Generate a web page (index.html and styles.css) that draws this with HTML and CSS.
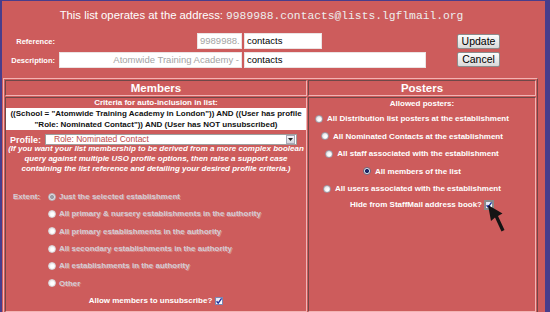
FILE: index.html
```html
<!DOCTYPE html>
<html>
<head>
<meta charset="utf-8">
<link rel="stylesheet" href="styles.css">
</head>
<body>
<div class="frame">
  <div class="title">This list operates at the address: <span class="addr">9989988.contacts@lists.lgflmail.org</span></div>
  <div class="form">
    <div class="lbl">Reference:</div>
    <div class="in in-pre in-ref">9989988.</div>
    <div class="in in-ref2">contacts</div>
    <div class="btn btn-up">Update</div>
    <div class="lbl">Description:</div>
    <div class="in in-pre in-desc">Atomwide Training Academy -</div>
    <div class="in in-desc2">contacts</div>
    <div class="btn">Cancel</div>
  </div>
  <div class="panels">
    <div class="hd">Members</div>
    <div class="hd">Posters</div>
    <div class="cell">
      <div class="crit-title">Criteria for auto-inclusion in list:</div>
      <div class="crit">((School = "Atomwide Training Academy in London")) AND ((User has profile<br>"Role: Nominated Contact")) AND (User has NOT unsubscribed)</div>
      <div class="profile">
        <div class="plbl">Profile:</div>
        <div class="select"><span class="seltext">Role: Nominated Contact</span><span class="arrow"><svg width="5" height="3" viewBox="0 0 5 3"><path d="M0 0H5L2.5 3Z" fill="#222"/></svg></span></div>
      </div>
      <div class="note">(If you want your list membership to be derived from a more complex boolean<br>query against multiple USO profile options, then raise a support case<br>containing the list reference and detailing your desired profile criteria.)</div>
      <div class="extent">
        <div class="elbl">Extent:</div>
        <div class="eopts">
          <div class="erow"><span class="radio dis on"></span>Just the selected establishment</div>
          <div class="erow"><span class="radio dis"></span>All primary &amp; nursery establishments in the authority</div>
          <div class="erow"><span class="radio dis"></span>All primary establishments in the authority</div>
          <div class="erow"><span class="radio dis"></span>All secondary establishments in the authority</div>
          <div class="erow"><span class="radio dis"></span>All establishments in the authority</div>
          <div class="erow"><span class="radio dis"></span>Other</div>
        </div>
      </div>
      <div class="allow">Allow members to unsubscribe? <span class="chk"><svg width="8" height="8" viewBox="0 0 8 8"><path d="M1.6 4.2L3.2 6.2L6.6 1.4" fill="none" stroke="#1f2f9c" stroke-width="1.4"/></svg></span></div>
    </div>
    <div class="cell">
      <div class="allowed">Allowed posters:</div>
      <div class="prow first"><span class="radio"></span>All Distribution list posters at the establishment</div>
      <div class="prow"><span class="radio"></span>All Nominated Contacts at the establishment</div>
      <div class="prow"><span class="radio"></span>All staff associated with the establishment</div>
      <div class="prow"><span class="radio on"></span>All members of the list</div>
      <div class="prow"><span class="radio"></span>All users associated with the establishment</div>
      <div class="hide">Hide from StaffMail address book? <span class="chk chk-focus"><svg width="8" height="8" viewBox="0 0 8 8"><path d="M1.6 4.2L3.2 6.2L6.6 1.4" fill="none" stroke="#1f2f9c" stroke-width="1.4"/></svg></span></div>
    </div>
  </div>
  <svg class="cursor" width="20" height="30" viewBox="0 0 20 30"><path d="M0 0L3 16L7 12.5L13.5 26.5L16.5 25L10 11L14.5 8.5Z" fill="#141414"/></svg>
</div>
</body>
</html>
```

FILE: styles.css
```css
body {
  margin: 0;
  background: #483d8b;
  font-family: "Liberation Sans", Arial, sans-serif;
  height: 312px;
  overflow: hidden;
}
.frame {
  position: relative;
  margin: 1px 5px 0 2px;
  height: 311px;
  background: #cd5c5c;
  color: #fff;
  overflow: hidden;
}
.title {
  padding: 7px 24px 0 0;
  text-align: center;
  font-size: 11.3px;
  line-height: 14px;
  white-space: nowrap;
}
.addr {
  font-family: "Liberation Mono", monospace;
  color: #eeeeee;
}
.form {
  display: grid;
  grid-template-columns: 55px 187px 213px 43px;
  grid-template-rows: 16px 16px;
  row-gap: 3px;
  margin-top: 10px;
  align-items: center;
}
.lbl {
  text-align: right;
  padding-right: 2px;
  font-weight: bold;
  font-size: 7.5px;
}
.in {
  height: 16px;
  box-sizing: border-box;
  background: #fff;
  border: 1px solid #ebe3e3;
  font-size: 9.5px;
  line-height: 14px;
  padding: 0 2px;
  color: #000;
  white-space: nowrap;
  overflow: hidden;
}
.in-pre {
  justify-self: end;
  margin-right: 2px;
  text-align: right;
  color: #a3a3a3;
}
.in-ref { width: 45px; }
.in-desc { width: 183px; }
.in-ref2 { width: 78px; justify-self: start; }
.in-desc2 { width: 182px; justify-self: start; }
.btn {
  align-self: start;
  height: 15px;
  width: 43px;
  box-sizing: border-box;
  border: 1px solid #8c8c8c;
  border-radius: 2px;
  background: linear-gradient(#fcfcfc, #d9d9d9);
  color: #000;
  font-size: 10.5px;
  line-height: 13px;
  text-align: center;
}
.btn-up { margin-top: 1px; }
.panels {
  display: grid;
  grid-template-columns: 302px 228px;
  grid-template-rows: 16px 215px;
  gap: 1px;
  padding: 1px;
  width: max-content;
  border: 1px solid;
  border-color: #f3b3b3 #6e4848 #6e4848 #f3b3b3;
  margin: 10px 0 0 1px;
}
.hd, .cell {
  box-sizing: border-box;
  border: 1px solid;
  border-color: #6e4848 #f3b3b3 #f3b3b3 #6e4848;
}
.hd {
  font-weight: bold;
  font-size: 11.5px;
  line-height: 14px;
  text-align: center;
}
.cell {
  font-size: 8px;
  font-weight: bold;
}
.crit-title {
  text-align: center;
  line-height: 10px;
}
.crit {
  background: #fff;
  color: #111;
  text-align: center;
  line-height: 11px;
  white-space: nowrap;
}
.profile {
  display: flex;
  align-items: center;
  height: 11px;
  margin-top: 4px;
}
.plbl {
  width: 35px;
  padding-left: 4px;
  font-size: 9px;
  white-space: nowrap;
}
.select {
  display: flex;
  align-items: center;
  width: 252px;
  height: 11px;
  box-sizing: border-box;
  background: #fff;
  border: 1px solid #9e9e9e;
}
.seltext {
  flex: 1;
  padding-left: 8px;
  color: #bd4c4c;
  font-weight: normal;
  font-size: 8.5px;
  line-height: 9px;
  white-space: nowrap;
}
.arrow {
  width: 9px;
  height: 9px;
  margin-right: 1px;
  box-sizing: border-box;
  border: 1px solid #a8a8b8;
  background: linear-gradient(#f4f4f8, #d4d4dc);
  display: flex;
  align-items: center;
  justify-content: center;
}
.note {
  font-style: italic;
  text-align: center;
  line-height: 10px;
  white-space: nowrap;
  margin-top: -1px;
}
.extent {
  display: flex;
  margin-top: 14px;
}
.elbl, .erow {
  color: #d4ccd4;
  text-shadow: 1px 1px 0 rgba(255, 255, 255, 0.3);
}
.elbl {
  width: 35px;
  padding-left: 7px;
  height: 17.3px;
  line-height: 17.3px;
}
.erow {
  display: flex;
  align-items: center;
  height: 17.3px;
}
.radio {
  width: 8px;
  height: 8px;
  box-sizing: border-box;
  border-radius: 50%;
  border: 1px solid #9a98a4;
  background: radial-gradient(circle at 62% 62%, #ffffff 20%, #cfcfd6 100%);
  margin-right: 4px;
  flex: none;
}
.radio.on {
  background: radial-gradient(circle, #1b2766 0 1.8px, #e8e8ee 2.3px, #c8c8d0 100%);
  border-color: #6a6a80;
}
.radio.dis {
  border-color: #d8d4d8;
  background: radial-gradient(circle at 60% 60%, #ffffff 30%, #e0dce0 100%);
  margin-right: 3px;
}
.radio.dis.on {
  background: radial-gradient(circle, #9c9aa4 0 1.8px, #e6e2e6 2.3px, #d4d0d4 100%);
  border-color: #b8b4bc;
}
.allow, .hide {
  display: flex;
  justify-content: center;
  align-items: center;
  line-height: 14px;
}
.allow { margin-top: 2px; }
.chk {
  width: 8px;
  height: 8px;
  box-sizing: border-box;
  margin-left: 3px;
  background: linear-gradient(135deg, #dfe4f4, #ffffff);
  border: 1px solid #7b86b0;
  display: flex;
  align-items: center;
  justify-content: center;
}
.chk svg { flex: none; }
.chk-focus {
  width: 10px;
  height: 10px;
  margin-left: 2px;
  border: 2px solid #8a8a8a;
}
.allowed {
  text-align: center;
  line-height: 10px;
  padding-top: 1px;
}
.prow {
  display: flex;
  justify-content: center;
  align-items: center;
  height: 17.4px;
  padding-right: 20px;
}
.prow.first { margin-top: 1.3px; }
.hide { height: 15px; }
.cursor {
  position: absolute;
  left: 486px;
  top: 204px;
}
```
